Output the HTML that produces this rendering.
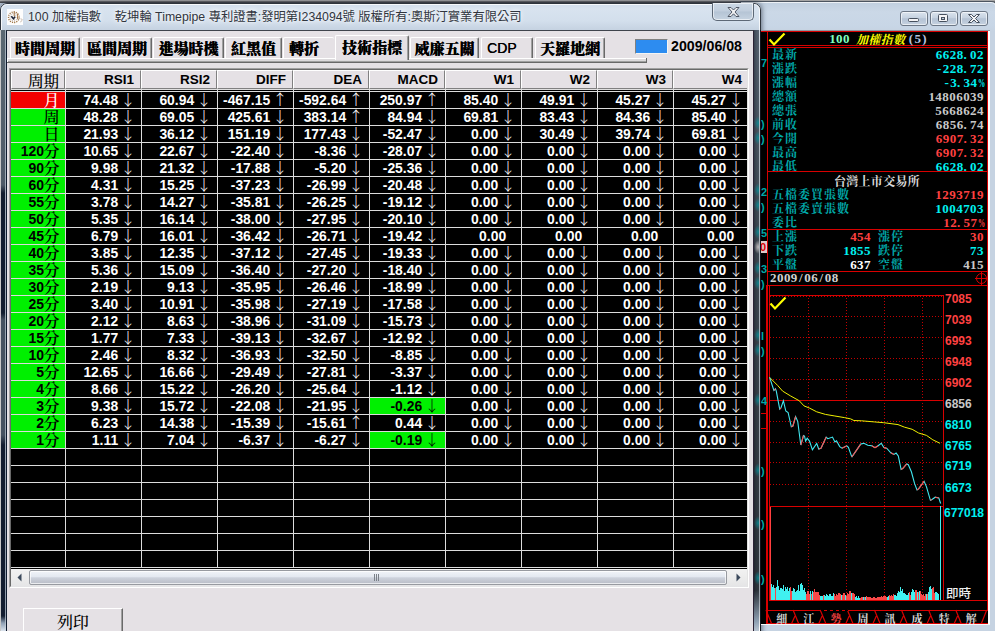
<!DOCTYPE html>
<html lang="zh-Hant"><head><meta charset="utf-8"><title>100 加權指數</title>
<style>
html,body{margin:0;padding:0}
body{width:995px;height:631px;overflow:hidden;position:relative;background:#c9d6e5;font-family:"Liberation Sans","Noto Sans CJK TC",sans-serif}
div{position:absolute;box-sizing:border-box;white-space:nowrap}
svg{position:absolute;overflow:visible}
b{font-weight:bold}i,u{font-style:normal;text-decoration:none}
.tab{border-left:1px solid #fff;border-top:1px solid #fff;border-right:1px solid #696969;box-shadow:inset -1px 0 0 #a0a0a0;font-family:"Noto Serif CJK TC","Noto Serif CJK SC","Liberation Serif",serif;font-weight:900;font-size:15px;line-height:19px;color:#000;text-align:center;border-radius:2px 2px 0 0;background:#e5e1e5;text-shadow:0.35px 0 0 #000}
.tab.lat{font-family:"Liberation Sans",sans-serif;font-weight:normal;font-size:14px;text-align:left;padding-left:5px;line-height:21px}
.hd{background:#e5e1e5;border-left:1px solid #fff;border-top:1px solid #fff;border-right:1px solid #808080;border-bottom:1px solid #808080;font-weight:bold;font-size:13.5px;line-height:18px;text-align:right;padding-right:6px;color:#000}
.h0{font-family:"Noto Serif CJK TC","Noto Serif CJK SC",serif;font-weight:500;font-size:15.5px;padding-right:5px;line-height:19px}
.c{height:16px;width:75px;color:#fff;font-weight:bold;font-size:13.9px;line-height:16px;text-align:right;padding-right:5px}
.c u{font-family:"Noto Sans CJK TC",sans-serif;font-weight:300;font-size:15px;display:inline-block;width:16px;text-align:center;margin-left:-2px;vertical-align:top;line-height:15px;position:relative;top:-1px}
.hi{background:#00f000;color:#000}
.c0{height:16px;width:54px;font-weight:bold;font-size:14px;line-height:16px;text-align:right;padding-right:5.5px;color:#000}
.c0 i{font-family:"Noto Serif CJK TC","Noto Serif CJK SC",serif;font-weight:600;font-size:16px;vertical-align:top;line-height:16px;margin-left:-0.5px}
.c0.r{background:#f40000;color:#fff}
.c0.g{background:#00f000}
.c0.r i,.c0.one i{font-weight:500}
.rl{font-family:"Noto Serif CJK TC","Noto Serif CJK SC",serif;font-weight:700;font-size:12px;line-height:14px;color:#00a8a8;letter-spacing:1px}
.rv{font-family:"Liberation Serif","Noto Serif CJK TC",serif;font-weight:bold;font-size:13px;line-height:14px;text-align:right;letter-spacing:0.45px}
.rv s{display:inline-block;width:6.5px;text-align:left;text-decoration:none}
.rv s.m{text-align:center}
.rv s.p{display:inline-block;transform:scaleX(.55);transform-origin:0 50%}
.cy{color:#00f0f0}.rd{color:#ff4040}.gy{color:#c8c8c8}.wh{color:#fff}
.ax{font-weight:bold;font-size:12px;line-height:14px;letter-spacing:0}
.bt{font-family:"Noto Serif CJK TC","Noto Serif CJK SC",serif;font-weight:700;font-size:11px;line-height:14px;color:#d8d8d8;text-align:center;width:24px}
.na u{width:8px}

</style></head><body>
<div style="left:0px;top:0px;width:995px;height:3px;background:linear-gradient(#a6a6a6 0,#a6a6a6 1px,#6c6c6e 1px,#6c6c6e 2px,#4a4a4e 2px)"></div>
<div style="left:740px;top:1px;width:258px;height:640px;border:1px solid #4c5560;border-radius:0 7px 0 0;background:linear-gradient(#c0cfdf,#cbd8e7 10px,#c8d6e6 24px,#c6d3e2 29px)"></div>
<div style="left:741px;top:2px;width:256px;height:640px;border:1px solid rgba(255,255,255,.7);border-radius:0 6px 0 0;border-left:none"></div>
<div style="left:900px;top:11px;width:28px;height:15px;border:1px solid #6c7786;border-radius:3px;background:linear-gradient(#dbe4ee,#c6d2e0 45%,#b4c2d4 52%,#c6d2e0);box-shadow:inset 0 0 0 1px rgba(255,255,255,.6)"></div>
<div style="left:930px;top:11px;width:28px;height:15px;border:1px solid #6c7786;border-radius:3px;background:linear-gradient(#dbe4ee,#c6d2e0 45%,#b4c2d4 52%,#c6d2e0);box-shadow:inset 0 0 0 1px rgba(255,255,255,.6)"></div>
<div style="left:960px;top:11px;width:28px;height:15px;border:1px solid #6c7786;border-radius:3px;background:linear-gradient(#dbe4ee,#c6d2e0 45%,#b4c2d4 52%,#c6d2e0);box-shadow:inset 0 0 0 1px rgba(255,255,255,.6)"></div>
<svg style="left:900px;top:11px" width="88" height="15" viewBox="0 0 88 15"><rect x="8.5" y="7.5" width="10" height="3" rx="1" fill="#f4f4f6" stroke="#47505e"/><rect x="38.500" y="3.500" width="9" height="7" rx="1" fill="#f4f4f6" stroke="#47505e"/><rect x="41.5" y="6.5" width="3" height="2" fill="#c0ccda" stroke="#47505e"/><path d="M68.500 3.500h3l2.500 2.500l2.500-2.500h3l-4 4l4 4h-3l-2.500-2.500l-2.500 2.500h-3l4-4z" fill="#f4f4f6" stroke="#47505e" stroke-linejoin="round"/></svg>
<div style="left:0px;top:3px;width:761px;height:640px;border-radius:7px 7px 0 0;box-shadow:0 0 5px 1px rgba(20,30,45,.55);background:linear-gradient(#cfdcea,#d8e3ef 6px,#d3dfec 18px,#c5d2e1 27px)"></div>
<div style="left:0px;top:3px;width:761px;height:640px;border:1px solid #2e343c;border-radius:7px 7px 0 0"></div>
<div style="left:1px;top:4px;width:759px;height:640px;border:1px solid rgba(255,255,255,.8);border-radius:6px 6px 0 0"></div>
<div style="left:0px;top:30px;width:1px;height:620px;background:#c8c8c8"></div>
<div style="left:1px;top:30px;width:4px;height:620px;background:linear-gradient(#5b6872,#4e5a68 155px,#131d30 163px,#131d30 283px,#465261 290px,#465261 405px,#131d30 415px,#131d30 586px,#8fa0b4 593px,#dbe4ee 601px)"></div>
<div style="left:5px;top:30px;width:1px;height:620px;background:linear-gradient(#a3afba,#97a3af 400px,#8e9aa8 585px,#d0dae4 600px)"></div>
<div style="left:754px;top:30px;width:5px;height:620px;background:linear-gradient(90deg,#394351,#4a5563 2px,#586472)"></div>
<div style="left:754px;top:30px;width:5px;height:620px;background:linear-gradient(rgba(0,0,0,0),rgba(0,0,0,.25) 200px,rgba(0,0,0,.45) 560px,rgba(160,180,200,.8) 592px,rgba(235,240,245,1) 612px)"></div>
<div style="left:754px;top:116px;width:6px;height:14px;background:radial-gradient(ellipse at 70% 50%,rgba(0,150,160,.75),rgba(0,150,160,0) 70%)"></div>
<div style="left:754px;top:131px;width:6px;height:14px;background:radial-gradient(ellipse at 70% 50%,rgba(0,150,160,.75),rgba(0,150,160,0) 70%)"></div>
<div style="left:754px;top:183px;width:6px;height:14px;background:radial-gradient(ellipse at 70% 50%,rgba(0,150,160,.75),rgba(0,150,160,0) 70%)"></div>
<div style="left:754px;top:198px;width:6px;height:14px;background:radial-gradient(ellipse at 70% 50%,rgba(0,150,160,.75),rgba(0,150,160,0) 70%)"></div>
<div style="left:754px;top:225px;width:6px;height:14px;background:radial-gradient(ellipse at 70% 50%,rgba(0,150,160,.75),rgba(0,150,160,0) 70%)"></div>
<div style="left:754px;top:240px;width:6px;height:14px;background:radial-gradient(ellipse at 70% 50%,rgba(235,225,225,.75),rgba(235,225,225,0) 70%)"></div>
<div style="left:754px;top:261px;width:6px;height:14px;background:radial-gradient(ellipse at 70% 50%,rgba(0,150,160,.75),rgba(0,150,160,0) 70%)"></div>
<div style="left:754px;top:276px;width:6px;height:14px;background:radial-gradient(ellipse at 70% 50%,rgba(0,150,160,.75),rgba(0,150,160,0) 70%)"></div>
<div style="left:754px;top:328px;width:6px;height:14px;background:radial-gradient(ellipse at 70% 50%,rgba(0,150,160,.75),rgba(0,150,160,0) 70%)"></div>
<div style="left:754px;top:343px;width:6px;height:14px;background:radial-gradient(ellipse at 70% 50%,rgba(0,150,160,.75),rgba(0,150,160,0) 70%)"></div>
<div style="left:754px;top:393px;width:6px;height:14px;background:radial-gradient(ellipse at 70% 50%,rgba(0,150,160,.75),rgba(0,150,160,0) 70%)"></div>
<div style="left:754px;top:463px;width:6px;height:14px;background:radial-gradient(ellipse at 70% 50%,rgba(0,150,160,.75),rgba(0,150,160,0) 70%)"></div>
<div style="left:754px;top:516px;width:6px;height:14px;background:radial-gradient(ellipse at 70% 50%,rgba(0,150,160,.75),rgba(0,150,160,0) 70%)"></div>
<div style="left:754px;top:571px;width:6px;height:14px;background:radial-gradient(ellipse at 70% 50%,rgba(0,150,160,.75),rgba(0,150,160,0) 70%)"></div>
<div style="left:759px;top:30px;width:1px;height:620px;background:linear-gradient(#d0d8e0,#aeb6be 100px,#9aa2aa 570px,#fff 600px)"></div>
<div style="left:760px;top:30px;width:1px;height:620px;background:#10141c"></div>
<div style="left:7px;top:9px;width:16px;height:16px;background:#fdfdfd"></div>
<svg style="left:7px;top:9px" width="16" height="16" viewBox="0 0 16 16"><g fill="none"><circle cx="6.800" cy="8.200" r="5.300" stroke="#a07848" stroke-width="1.300" stroke-dasharray="1.200 1"/><circle cx="6.800" cy="8.200" r="3.800" stroke="#8a6a58" stroke-width="1" stroke-dasharray="0.900 1.400" opacity=".8"/><circle cx="6.800" cy="8.200" r="2.200" stroke="#9a9050" stroke-width=".9" stroke-dasharray="0.800 1.300" opacity=".7"/><path d="M7.300 2.500v5M10.500 4.500v5.500" stroke="#a06a3a" stroke-width="1" opacity=".85"/><path d="M4.300 7.200l2.200 2.600l1.600-2.200" stroke="#1c2238" stroke-width="1.500"/><path d="M11.500 9.500q2.500 0.200 4 1.200q-1.500 1.500-2 2.800" stroke="#b09a88" stroke-width="1" stroke-dasharray="1.200 0.800"/></g></svg>
<div style="left:28px;top:8px;width:520px;height:18px;font-size:12.3px;line-height:18px;color:#30353e;white-space:pre;text-shadow:0 0 6px #fff,0 0 3px rgba(255,255,255,.8)">100 加權指數    乾坤輪 Timepipe 專利證書:發明第I234094號 版權所有:奧斯汀實業有限公司</div>
<div style="left:712px;top:3px;width:42px;height:18px;border:1px solid #5d6876;border-top:none;border-radius:0 0 5px 5px;background:linear-gradient(#ccd8e5,#c1cedd 48%,#b5c4d5 52%,#c6d3e1);box-shadow:inset 0 0 0 1px rgba(255,255,255,.6)"></div>
<svg style="left:727px;top:7px" width="13" height="10" viewBox="0 0 13 10"><path d="M1 .5h3l2.500 2.500l2.500-2.500h3l-4 4.500l4 4.500h-3l-2.500-2.700l-2.500 2.700h-3l4-4.500z" fill="#f2f2f4" stroke="#505866" stroke-linejoin="round"/></svg>
<div style="left:6px;top:30px;width:748px;height:620px;border:1px solid #0e1a2e;border-top-color:#3f444c;border-right-color:#2a2235;background:#e5e1e5"></div>
<div style="left:7px;top:58px;width:640px;height:1px;background:#fff"></div>
<div style="left:7px;top:58px;width:1px;height:4px;background:#fff"></div>
<div style="left:8px;top:59px;width:638px;height:2px;background:#dcdadc"></div>
<div style="left:8px;top:61px;width:639px;height:1px;background:#a0a0a0"></div>
<div style="left:7px;top:62px;width:640px;height:1px;background:#696969"></div>
<div style="left:646px;top:58px;width:1px;height:5px;background:#696969"></div>
<div class="tab " style="left:10px;top:37px;width:70px;height:21px;">時間周期</div>
<div class="tab " style="left:82px;top:37px;width:70px;height:21px;">區間周期</div>
<div class="tab " style="left:153px;top:37px;width:71px;height:21px;">進場時機</div>
<div class="tab " style="left:225px;top:37px;width:57px;height:21px;">紅黑值</div>
<div class="tab " style="left:283px;top:37px;width:51px;height:21px;text-align:left;padding-left:5px;border-right:none;box-shadow:none;">轉折</div>
<div class="tab " style="left:410px;top:37px;width:69px;height:21px;">威廉五關</div>
<div class="tab lat" style="left:481px;top:37px;width:52px;height:21px;">CDP</div>
<div class="tab " style="left:535px;top:37px;width:70px;height:21px;">天羅地網</div>
<div class="tab" style="left:335px;top:35px;width:74px;height:25px;line-height:21px;z-index:2">技術指標</div>
<div style="left:635px;top:39px;width:33px;height:15px;border:1px solid #f4f4f4;border-top-color:#808080;border-left-color:#808080;background:#2d8cf0"></div>
<div style="left:671px;top:37px;width:75px;height:18px;font-weight:bold;font-size:14.2px;line-height:18px;color:#000">2009/06/08</div>
<div style="left:9px;top:68px;width:740px;height:520px;border:1px solid #a0a0a0;border-right-color:#fff;border-bottom-color:#fff;background:#e5e1e5"></div>
<div style="left:10px;top:69px;width:738px;height:518px;border:1px solid #696969;border-right-color:#e3e3e3;border-bottom-color:#e3e3e3;background:#000"></div>
<div style="left:11px;top:70px;width:736px;height:498px;overflow:hidden;background:#000">
<div class="hd h0" style="left:0px;top:0px;width:54px;height:19px;">周期</div>
<div class="hd" style="left:54px;top:0px;width:76px;height:19px;">RSI1</div>
<div class="hd" style="left:130px;top:0px;width:76px;height:19px;">RSI2</div>
<div class="hd" style="left:206px;top:0px;width:76px;height:19px;">DIFF</div>
<div class="hd" style="left:282px;top:0px;width:76px;height:19px;">DEA</div>
<div class="hd" style="left:358px;top:0px;width:76px;height:19px;">MACD</div>
<div class="hd" style="left:434px;top:0px;width:76px;height:19px;">W1</div>
<div class="hd" style="left:510px;top:0px;width:76px;height:19px;">W2</div>
<div class="hd" style="left:586px;top:0px;width:76px;height:19px;">W3</div>
<div class="hd" style="left:662px;top:0px;width:76px;height:19px;">W4</div>
<div style="left:0px;top:19px;width:737px;height:1px;background:#e0e0e0"></div>
<div class="c0 r one" style="left:0;top:22px"><i>月</i></div>
<div class="c" style="left:55px;top:22px">74.48 <u>↓</u></div>
<div class="c" style="left:131px;top:22px">60.94 <u>↓</u></div>
<div class="c" style="left:207px;top:22px">-467.15 <u>↑</u></div>
<div class="c" style="left:283px;top:22px">-592.64 <u>↑</u></div>
<div class="c" style="left:359px;top:22px">250.97 <u>↑</u></div>
<div class="c" style="left:435px;top:22px">85.40 <u>↓</u></div>
<div class="c" style="left:511px;top:22px">49.91 <u>↓</u></div>
<div class="c" style="left:587px;top:22px">45.27 <u>↓</u></div>
<div class="c" style="left:663px;top:22px">45.27 <u>↓</u></div>
<div class="c0 g one" style="left:0;top:39px"><i>周</i></div>
<div class="c" style="left:55px;top:39px">48.28 <u>↓</u></div>
<div class="c" style="left:131px;top:39px">69.05 <u>↓</u></div>
<div class="c" style="left:207px;top:39px">425.61 <u>↓</u></div>
<div class="c" style="left:283px;top:39px">383.14 <u>↑</u></div>
<div class="c" style="left:359px;top:39px">84.94 <u>↓</u></div>
<div class="c" style="left:435px;top:39px">69.81 <u>↓</u></div>
<div class="c" style="left:511px;top:39px">83.43 <u>↓</u></div>
<div class="c" style="left:587px;top:39px">84.36 <u>↓</u></div>
<div class="c" style="left:663px;top:39px">85.40 <u>↓</u></div>
<div class="c0 g one" style="left:0;top:56px"><i>日</i></div>
<div class="c" style="left:55px;top:56px">21.93 <u>↓</u></div>
<div class="c" style="left:131px;top:56px">36.12 <u>↓</u></div>
<div class="c" style="left:207px;top:56px">151.19 <u>↓</u></div>
<div class="c" style="left:283px;top:56px">177.43 <u>↓</u></div>
<div class="c" style="left:359px;top:56px">-52.47 <u>↓</u></div>
<div class="c" style="left:435px;top:56px">0.00 <u>↓</u></div>
<div class="c" style="left:511px;top:56px">30.49 <u>↓</u></div>
<div class="c" style="left:587px;top:56px">39.74 <u>↓</u></div>
<div class="c" style="left:663px;top:56px">69.81 <u>↓</u></div>
<div class="c0 g" style="left:0;top:73px"><b>120</b><i>分</i></div>
<div class="c" style="left:55px;top:73px">10.65 <u>↓</u></div>
<div class="c" style="left:131px;top:73px">22.67 <u>↓</u></div>
<div class="c" style="left:207px;top:73px">-22.40 <u>↓</u></div>
<div class="c" style="left:283px;top:73px">-8.36 <u>↓</u></div>
<div class="c" style="left:359px;top:73px">-28.07 <u>↓</u></div>
<div class="c" style="left:435px;top:73px">0.00 <u>↓</u></div>
<div class="c" style="left:511px;top:73px">0.00 <u>↓</u></div>
<div class="c" style="left:587px;top:73px">0.00 <u>↓</u></div>
<div class="c" style="left:663px;top:73px">0.00 <u>↓</u></div>
<div class="c0 g" style="left:0;top:90px"><b>90</b><i>分</i></div>
<div class="c" style="left:55px;top:90px">9.98 <u>↓</u></div>
<div class="c" style="left:131px;top:90px">21.32 <u>↓</u></div>
<div class="c" style="left:207px;top:90px">-17.88 <u>↓</u></div>
<div class="c" style="left:283px;top:90px">-5.20 <u>↓</u></div>
<div class="c" style="left:359px;top:90px">-25.36 <u>↓</u></div>
<div class="c" style="left:435px;top:90px">0.00 <u>↓</u></div>
<div class="c" style="left:511px;top:90px">0.00 <u>↓</u></div>
<div class="c" style="left:587px;top:90px">0.00 <u>↓</u></div>
<div class="c" style="left:663px;top:90px">0.00 <u>↓</u></div>
<div class="c0 g" style="left:0;top:107px"><b>60</b><i>分</i></div>
<div class="c" style="left:55px;top:107px">4.31 <u>↓</u></div>
<div class="c" style="left:131px;top:107px">15.25 <u>↓</u></div>
<div class="c" style="left:207px;top:107px">-37.23 <u>↓</u></div>
<div class="c" style="left:283px;top:107px">-26.99 <u>↓</u></div>
<div class="c" style="left:359px;top:107px">-20.48 <u>↓</u></div>
<div class="c" style="left:435px;top:107px">0.00 <u>↓</u></div>
<div class="c" style="left:511px;top:107px">0.00 <u>↓</u></div>
<div class="c" style="left:587px;top:107px">0.00 <u>↓</u></div>
<div class="c" style="left:663px;top:107px">0.00 <u>↓</u></div>
<div class="c0 g" style="left:0;top:124px"><b>55</b><i>分</i></div>
<div class="c" style="left:55px;top:124px">3.78 <u>↓</u></div>
<div class="c" style="left:131px;top:124px">14.27 <u>↓</u></div>
<div class="c" style="left:207px;top:124px">-35.81 <u>↓</u></div>
<div class="c" style="left:283px;top:124px">-26.25 <u>↓</u></div>
<div class="c" style="left:359px;top:124px">-19.12 <u>↓</u></div>
<div class="c" style="left:435px;top:124px">0.00 <u>↓</u></div>
<div class="c" style="left:511px;top:124px">0.00 <u>↓</u></div>
<div class="c" style="left:587px;top:124px">0.00 <u>↓</u></div>
<div class="c" style="left:663px;top:124px">0.00 <u>↓</u></div>
<div class="c0 g" style="left:0;top:141px"><b>50</b><i>分</i></div>
<div class="c" style="left:55px;top:141px">5.35 <u>↓</u></div>
<div class="c" style="left:131px;top:141px">16.14 <u>↓</u></div>
<div class="c" style="left:207px;top:141px">-38.00 <u>↓</u></div>
<div class="c" style="left:283px;top:141px">-27.95 <u>↓</u></div>
<div class="c" style="left:359px;top:141px">-20.10 <u>↓</u></div>
<div class="c" style="left:435px;top:141px">0.00 <u>↓</u></div>
<div class="c" style="left:511px;top:141px">0.00 <u>↓</u></div>
<div class="c" style="left:587px;top:141px">0.00 <u>↓</u></div>
<div class="c" style="left:663px;top:141px">0.00 <u>↓</u></div>
<div class="c0 g" style="left:0;top:158px"><b>45</b><i>分</i></div>
<div class="c" style="left:55px;top:158px">6.79 <u>↓</u></div>
<div class="c" style="left:131px;top:158px">16.01 <u>↓</u></div>
<div class="c" style="left:207px;top:158px">-36.42 <u>↓</u></div>
<div class="c" style="left:283px;top:158px">-26.71 <u>↓</u></div>
<div class="c" style="left:359px;top:158px">-19.42 <u>↓</u></div>
<div class="c na" style="left:435px;top:158px">0.00 <u>&nbsp;</u></div>
<div class="c na" style="left:511px;top:158px">0.00 <u>&nbsp;</u></div>
<div class="c na" style="left:587px;top:158px">0.00 <u>&nbsp;</u></div>
<div class="c na" style="left:663px;top:158px">0.00 <u>&nbsp;</u></div>
<div class="c0 g" style="left:0;top:175px"><b>40</b><i>分</i></div>
<div class="c" style="left:55px;top:175px">3.85 <u>↓</u></div>
<div class="c" style="left:131px;top:175px">12.35 <u>↓</u></div>
<div class="c" style="left:207px;top:175px">-37.12 <u>↓</u></div>
<div class="c" style="left:283px;top:175px">-27.45 <u>↓</u></div>
<div class="c" style="left:359px;top:175px">-19.33 <u>↓</u></div>
<div class="c" style="left:435px;top:175px">0.00 <u>↓</u></div>
<div class="c" style="left:511px;top:175px">0.00 <u>↓</u></div>
<div class="c" style="left:587px;top:175px">0.00 <u>↓</u></div>
<div class="c" style="left:663px;top:175px">0.00 <u>↓</u></div>
<div class="c0 g" style="left:0;top:192px"><b>35</b><i>分</i></div>
<div class="c" style="left:55px;top:192px">5.36 <u>↓</u></div>
<div class="c" style="left:131px;top:192px">15.09 <u>↓</u></div>
<div class="c" style="left:207px;top:192px">-36.40 <u>↓</u></div>
<div class="c" style="left:283px;top:192px">-27.20 <u>↓</u></div>
<div class="c" style="left:359px;top:192px">-18.40 <u>↓</u></div>
<div class="c" style="left:435px;top:192px">0.00 <u>↓</u></div>
<div class="c" style="left:511px;top:192px">0.00 <u>↓</u></div>
<div class="c" style="left:587px;top:192px">0.00 <u>↓</u></div>
<div class="c" style="left:663px;top:192px">0.00 <u>↓</u></div>
<div class="c0 g" style="left:0;top:209px"><b>30</b><i>分</i></div>
<div class="c" style="left:55px;top:209px">2.19 <u>↓</u></div>
<div class="c" style="left:131px;top:209px">9.13 <u>↓</u></div>
<div class="c" style="left:207px;top:209px">-35.95 <u>↓</u></div>
<div class="c" style="left:283px;top:209px">-26.46 <u>↓</u></div>
<div class="c" style="left:359px;top:209px">-18.99 <u>↓</u></div>
<div class="c" style="left:435px;top:209px">0.00 <u>↓</u></div>
<div class="c" style="left:511px;top:209px">0.00 <u>↓</u></div>
<div class="c" style="left:587px;top:209px">0.00 <u>↓</u></div>
<div class="c" style="left:663px;top:209px">0.00 <u>↓</u></div>
<div class="c0 g" style="left:0;top:226px"><b>25</b><i>分</i></div>
<div class="c" style="left:55px;top:226px">3.40 <u>↓</u></div>
<div class="c" style="left:131px;top:226px">10.91 <u>↓</u></div>
<div class="c" style="left:207px;top:226px">-35.98 <u>↓</u></div>
<div class="c" style="left:283px;top:226px">-27.19 <u>↓</u></div>
<div class="c" style="left:359px;top:226px">-17.58 <u>↓</u></div>
<div class="c" style="left:435px;top:226px">0.00 <u>↓</u></div>
<div class="c" style="left:511px;top:226px">0.00 <u>↓</u></div>
<div class="c" style="left:587px;top:226px">0.00 <u>↓</u></div>
<div class="c" style="left:663px;top:226px">0.00 <u>↓</u></div>
<div class="c0 g" style="left:0;top:243px"><b>20</b><i>分</i></div>
<div class="c" style="left:55px;top:243px">2.12 <u>↓</u></div>
<div class="c" style="left:131px;top:243px">8.63 <u>↓</u></div>
<div class="c" style="left:207px;top:243px">-38.96 <u>↓</u></div>
<div class="c" style="left:283px;top:243px">-31.09 <u>↓</u></div>
<div class="c" style="left:359px;top:243px">-15.73 <u>↓</u></div>
<div class="c" style="left:435px;top:243px">0.00 <u>↓</u></div>
<div class="c" style="left:511px;top:243px">0.00 <u>↓</u></div>
<div class="c" style="left:587px;top:243px">0.00 <u>↓</u></div>
<div class="c" style="left:663px;top:243px">0.00 <u>↓</u></div>
<div class="c0 g" style="left:0;top:260px"><b>15</b><i>分</i></div>
<div class="c" style="left:55px;top:260px">1.77 <u>↓</u></div>
<div class="c" style="left:131px;top:260px">7.33 <u>↓</u></div>
<div class="c" style="left:207px;top:260px">-39.13 <u>↓</u></div>
<div class="c" style="left:283px;top:260px">-32.67 <u>↓</u></div>
<div class="c" style="left:359px;top:260px">-12.92 <u>↓</u></div>
<div class="c" style="left:435px;top:260px">0.00 <u>↓</u></div>
<div class="c" style="left:511px;top:260px">0.00 <u>↓</u></div>
<div class="c" style="left:587px;top:260px">0.00 <u>↓</u></div>
<div class="c" style="left:663px;top:260px">0.00 <u>↓</u></div>
<div class="c0 g" style="left:0;top:277px"><b>10</b><i>分</i></div>
<div class="c" style="left:55px;top:277px">2.46 <u>↓</u></div>
<div class="c" style="left:131px;top:277px">8.32 <u>↓</u></div>
<div class="c" style="left:207px;top:277px">-36.93 <u>↓</u></div>
<div class="c" style="left:283px;top:277px">-32.50 <u>↓</u></div>
<div class="c" style="left:359px;top:277px">-8.85 <u>↓</u></div>
<div class="c" style="left:435px;top:277px">0.00 <u>↓</u></div>
<div class="c" style="left:511px;top:277px">0.00 <u>↓</u></div>
<div class="c" style="left:587px;top:277px">0.00 <u>↓</u></div>
<div class="c" style="left:663px;top:277px">0.00 <u>↓</u></div>
<div class="c0 g" style="left:0;top:294px"><b>5</b><i>分</i></div>
<div class="c" style="left:55px;top:294px">12.65 <u>↓</u></div>
<div class="c" style="left:131px;top:294px">16.66 <u>↓</u></div>
<div class="c" style="left:207px;top:294px">-29.49 <u>↓</u></div>
<div class="c" style="left:283px;top:294px">-27.81 <u>↓</u></div>
<div class="c" style="left:359px;top:294px">-3.37 <u>↓</u></div>
<div class="c" style="left:435px;top:294px">0.00 <u>↓</u></div>
<div class="c" style="left:511px;top:294px">0.00 <u>↓</u></div>
<div class="c" style="left:587px;top:294px">0.00 <u>↓</u></div>
<div class="c" style="left:663px;top:294px">0.00 <u>↓</u></div>
<div class="c0 g" style="left:0;top:311px"><b>4</b><i>分</i></div>
<div class="c" style="left:55px;top:311px">8.66 <u>↓</u></div>
<div class="c" style="left:131px;top:311px">15.22 <u>↓</u></div>
<div class="c" style="left:207px;top:311px">-26.20 <u>↓</u></div>
<div class="c" style="left:283px;top:311px">-25.64 <u>↓</u></div>
<div class="c" style="left:359px;top:311px">-1.12 <u>↓</u></div>
<div class="c" style="left:435px;top:311px">0.00 <u>↓</u></div>
<div class="c" style="left:511px;top:311px">0.00 <u>↓</u></div>
<div class="c" style="left:587px;top:311px">0.00 <u>↓</u></div>
<div class="c" style="left:663px;top:311px">0.00 <u>↓</u></div>
<div class="c0 g" style="left:0;top:328px"><b>3</b><i>分</i></div>
<div class="c" style="left:55px;top:328px">9.38 <u>↓</u></div>
<div class="c" style="left:131px;top:328px">15.72 <u>↓</u></div>
<div class="c" style="left:207px;top:328px">-22.08 <u>↓</u></div>
<div class="c" style="left:283px;top:328px">-21.95 <u>↓</u></div>
<div class="c hi" style="left:359px;top:328px">-0.26 <u>↓</u></div>
<div class="c" style="left:435px;top:328px">0.00 <u>↓</u></div>
<div class="c" style="left:511px;top:328px">0.00 <u>↓</u></div>
<div class="c" style="left:587px;top:328px">0.00 <u>↓</u></div>
<div class="c" style="left:663px;top:328px">0.00 <u>↓</u></div>
<div class="c0 g" style="left:0;top:345px"><b>2</b><i>分</i></div>
<div class="c" style="left:55px;top:345px">6.23 <u>↓</u></div>
<div class="c" style="left:131px;top:345px">14.38 <u>↓</u></div>
<div class="c" style="left:207px;top:345px">-15.39 <u>↓</u></div>
<div class="c" style="left:283px;top:345px">-15.61 <u>↑</u></div>
<div class="c" style="left:359px;top:345px">0.44 <u>↓</u></div>
<div class="c" style="left:435px;top:345px">0.00 <u>↓</u></div>
<div class="c" style="left:511px;top:345px">0.00 <u>↓</u></div>
<div class="c" style="left:587px;top:345px">0.00 <u>↓</u></div>
<div class="c" style="left:663px;top:345px">0.00 <u>↓</u></div>
<div class="c0 g" style="left:0;top:362px"><b>1</b><i>分</i></div>
<div class="c" style="left:55px;top:362px">1.11 <u>↓</u></div>
<div class="c" style="left:131px;top:362px">7.04 <u>↓</u></div>
<div class="c" style="left:207px;top:362px">-6.37 <u>↓</u></div>
<div class="c" style="left:283px;top:362px">-6.27 <u>↓</u></div>
<div class="c hi" style="left:359px;top:362px">-0.19 <u>↓</u></div>
<div class="c" style="left:435px;top:362px">0.00 <u>↓</u></div>
<div class="c" style="left:511px;top:362px">0.00 <u>↓</u></div>
<div class="c" style="left:587px;top:362px">0.00 <u>↓</u></div>
<div class="c" style="left:663px;top:362px">0.00 <u>↓</u></div>
<div style="left:0px;top:21px;width:737px;height:1px;background:#dcdcdc"></div>
<div style="left:0px;top:38px;width:737px;height:1px;background:#dcdcdc"></div>
<div style="left:0px;top:55px;width:737px;height:1px;background:#dcdcdc"></div>
<div style="left:0px;top:72px;width:737px;height:1px;background:#dcdcdc"></div>
<div style="left:0px;top:89px;width:737px;height:1px;background:#dcdcdc"></div>
<div style="left:0px;top:106px;width:737px;height:1px;background:#dcdcdc"></div>
<div style="left:0px;top:123px;width:737px;height:1px;background:#dcdcdc"></div>
<div style="left:0px;top:140px;width:737px;height:1px;background:#dcdcdc"></div>
<div style="left:0px;top:157px;width:737px;height:1px;background:#dcdcdc"></div>
<div style="left:0px;top:174px;width:737px;height:1px;background:#dcdcdc"></div>
<div style="left:0px;top:191px;width:737px;height:1px;background:#dcdcdc"></div>
<div style="left:0px;top:208px;width:737px;height:1px;background:#dcdcdc"></div>
<div style="left:0px;top:225px;width:737px;height:1px;background:#dcdcdc"></div>
<div style="left:0px;top:242px;width:737px;height:1px;background:#dcdcdc"></div>
<div style="left:0px;top:259px;width:737px;height:1px;background:#dcdcdc"></div>
<div style="left:0px;top:276px;width:737px;height:1px;background:#dcdcdc"></div>
<div style="left:0px;top:293px;width:737px;height:1px;background:#dcdcdc"></div>
<div style="left:0px;top:310px;width:737px;height:1px;background:#dcdcdc"></div>
<div style="left:0px;top:327px;width:737px;height:1px;background:#dcdcdc"></div>
<div style="left:0px;top:344px;width:737px;height:1px;background:#dcdcdc"></div>
<div style="left:0px;top:361px;width:737px;height:1px;background:#dcdcdc"></div>
<div style="left:0px;top:378px;width:737px;height:1px;background:#dcdcdc"></div>
<div style="left:0px;top:395px;width:737px;height:1px;background:#dcdcdc"></div>
<div style="left:0px;top:412px;width:737px;height:1px;background:#dcdcdc"></div>
<div style="left:0px;top:429px;width:737px;height:1px;background:#dcdcdc"></div>
<div style="left:0px;top:446px;width:737px;height:1px;background:#dcdcdc"></div>
<div style="left:0px;top:463px;width:737px;height:1px;background:#dcdcdc"></div>
<div style="left:0px;top:480px;width:737px;height:1px;background:#dcdcdc"></div>
<div style="left:0px;top:497px;width:737px;height:1px;background:#dcdcdc"></div>
<div style="left:54px;top:20px;width:1px;height:478px;background:#dcdcdc"></div>
<div style="left:130px;top:20px;width:1px;height:478px;background:#dcdcdc"></div>
<div style="left:206px;top:20px;width:1px;height:478px;background:#dcdcdc"></div>
<div style="left:282px;top:20px;width:1px;height:478px;background:#dcdcdc"></div>
<div style="left:358px;top:20px;width:1px;height:478px;background:#dcdcdc"></div>
<div style="left:434px;top:20px;width:1px;height:478px;background:#dcdcdc"></div>
<div style="left:510px;top:20px;width:1px;height:478px;background:#dcdcdc"></div>
<div style="left:586px;top:20px;width:1px;height:478px;background:#dcdcdc"></div>
<div style="left:662px;top:20px;width:1px;height:478px;background:#dcdcdc"></div>
<div style="left:738px;top:20px;width:1px;height:478px;background:#dcdcdc"></div>
</div>
<div style="left:11px;top:568px;width:736px;height:1px;background:#000"></div>
<div style="left:11px;top:569px;width:736px;height:18px;background:linear-gradient(#f2f2f2,#ececec 50%,#e4e4e6)"></div>
<div style="left:29px;top:570px;width:698px;height:15px;border:1px solid #979aa0;border-radius:2px;background:linear-gradient(#f1f4f9,#e3e8f0 45%,#cdd2dc 52%,#b9bcc6);box-shadow:inset 0 0 0 1px rgba(255,255,255,.7)"></div>
<svg style="left:17px;top:573px" width="5" height="9" viewBox="0 0 5 9"><path d="M4.500 0.500v8l-4-4z" fill="#3c4a5c"/></svg>
<svg style="left:736px;top:573px" width="5" height="9" viewBox="0 0 5 9"><path d="M.5 .5v8l4-4z" fill="#3c4a5c"/></svg>
<svg style="left:373px;top:574px" width="8" height="7" viewBox="0 0 8 7"><path d="M1.500 0v7M3.500 0v7M5.500 0v7" stroke="#7a8088" fill="none"/></svg>
<div style="left:23px;top:608px;width:100px;height:30px;border:1px solid #fff;border-right-color:#696969;box-shadow:inset -1px 0 0 #a0a0a0;background:#e5e1e5;font-family:'Noto Serif CJK TC','Noto Serif CJK SC',serif;font-weight:500;font-size:16px;line-height:26px;text-align:center;color:#000">列印</div>
<div style="left:761px;top:30px;width:229px;height:1px;background:#8f98a3"></div>
<div style="left:761px;top:31px;width:227px;height:593px;background:#000"></div>
<div style="left:988px;top:31px;width:2px;height:594px;background:#fff"></div>
<div style="left:761px;top:624px;width:229px;height:1px;background:#f4f6f8"></div>
<div style="left:761px;top:31px;width:227px;height:1px;background:#d80000"></div>
<div style="left:767px;top:31px;width:1px;height:255px;background:#d80000"></div>
<div style="left:987px;top:31px;width:1px;height:255px;background:#d80000"></div>
<div style="left:766px;top:285px;width:2px;height:339px;background:#d80000"></div>
<div style="left:987px;top:285px;width:1px;height:326px;background:#d80000"></div>
<div style="left:767px;top:45px;width:221px;height:1px;background:#d80000"></div>
<div style="left:767px;top:47px;width:221px;height:1px;background:#d80000"></div>
<svg style="left:768px;top:32px" width="18" height="14" viewBox="0 0 18 14"><path d="M1.500 7.500l4.500 5l10.500-11" fill="none" stroke="#ffff00" stroke-width="2.200"/></svg>
<div class="rv" style="left:826px;top:32px;width:24px;height:13px;color:#80ffc0;">100</div>
<div class="rl" style="left:856px;top:32px;width:54px;height:13px;color:#ffff00;font-style:italic;letter-spacing:0.3px">加權指數</div>
<div class="rv" style="left:908px;top:32px;width:22px;height:13px;color:#b8c4e0;text-align:left"><s class="m">(</s>5<s class="m">)</s></div>
<div class="rl" style="left:772px;top:47px;width:100px;height:14px;">最新</div>
<div class="rv cy" style="left:914px;top:48px;width:70px;height:14px;">6628<s>.</s>02</div>
<div class="rl" style="left:772px;top:61px;width:100px;height:14px;">漲跌</div>
<div class="rv cy" style="left:914px;top:62px;width:70px;height:14px;"><s class="m">-</s>228<s>.</s>72</div>
<div class="rl" style="left:772px;top:75px;width:100px;height:14px;">漲幅</div>
<div class="rv cy" style="left:914px;top:76px;width:70px;height:14px;"><s class="m">-</s>3<s>.</s>34<s class="p">%</s></div>
<div class="rl" style="left:772px;top:89px;width:100px;height:14px;">總額</div>
<div class="rv gy" style="left:914px;top:90px;width:70px;height:14px;">14806039</div>
<div class="rl" style="left:772px;top:103px;width:100px;height:14px;">總張</div>
<div class="rv gy" style="left:914px;top:104px;width:70px;height:14px;">5668624</div>
<div class="rl" style="left:772px;top:117px;width:100px;height:14px;">前收</div>
<div class="rv gy" style="left:914px;top:118px;width:70px;height:14px;">6856<s>.</s>74</div>
<div class="rl" style="left:772px;top:131px;width:100px;height:14px;">今開</div>
<div class="rv rd" style="left:914px;top:132px;width:70px;height:14px;">6907<s>.</s>32</div>
<div class="rl" style="left:772px;top:145px;width:100px;height:14px;">最高</div>
<div class="rv rd" style="left:914px;top:146px;width:70px;height:14px;">6907<s>.</s>32</div>
<div class="rl" style="left:772px;top:159px;width:100px;height:14px;">最低</div>
<div class="rv cy" style="left:914px;top:160px;width:70px;height:14px;">6628<s>.</s>02</div>
<div style="left:767px;top:171px;width:221px;height:1px;background:#d80000"></div>
<div class="rl" style="left:767px;top:174px;width:220px;height:14px;color:#d8d8d8;text-align:center;letter-spacing:0.3px">台灣上市交易所</div>
<div class="rl" style="left:772px;top:187px;width:100px;height:14px;">五檔委買張數</div>
<div class="rv rd" style="left:914px;top:188px;width:70px;height:14px;">1293719</div>
<div class="rl" style="left:772px;top:201px;width:100px;height:14px;">五檔委賣張數</div>
<div class="rv cy" style="left:914px;top:202px;width:70px;height:14px;">1004703</div>
<div class="rl" style="left:772px;top:215px;width:100px;height:14px;">委比</div>
<div class="rv rd" style="left:914px;top:216px;width:70px;height:14px;">12<s>.</s>57<s class="p">%</s></div>
<div style="left:767px;top:229px;width:221px;height:1px;background:#d80000"></div>
<div class="rl" style="left:772px;top:229px;width:100px;height:14px;">上漲</div>
<div class="rv rd" style="left:831px;top:230px;width:40px;height:14px;">454</div>
<div class="rl" style="left:878px;top:229px;width:100px;height:14px;">漲停</div>
<div class="rv rd" style="left:944px;top:230px;width:40px;height:14px;">30</div>
<div class="rl" style="left:772px;top:243px;width:100px;height:14px;">下跌</div>
<div class="rv cy" style="left:831px;top:244px;width:40px;height:14px;">1855</div>
<div class="rl" style="left:878px;top:243px;width:100px;height:14px;">跌停</div>
<div class="rv cy" style="left:944px;top:244px;width:40px;height:14px;">73</div>
<div class="rl" style="left:772px;top:257px;width:100px;height:14px;">平盤</div>
<div class="rv wh" style="left:831px;top:258px;width:40px;height:14px;">637</div>
<div class="rl" style="left:878px;top:257px;width:100px;height:14px;">空盤</div>
<div class="rv gy" style="left:944px;top:258px;width:40px;height:14px;">415</div>
<div style="left:767px;top:271px;width:221px;height:1px;background:#d80000"></div>
<div class="rv" style="left:770px;top:271px;width:90px;height:14px;text-align:left;color:#d0d0d0">2009<s class="m">/</s>06<s class="m">/</s>08</div>
<svg style="left:975px;top:272px" width="13" height="13" viewBox="0 0 13 13"><g fill="none" stroke="#d80000"><circle cx="6.500" cy="6.500" r="5"/><path d="M6.500 0v13M0 6.500h13"/></g></svg>
<div style="left:767px;top:285px;width:221px;height:1px;background:#d80000"></div>
<div style="left:767px;top:610px;width:221px;height:1px;background:#d80000"></div>
<svg style="left:761px;top:285px" width="227" height="340" viewBox="761 285 227 340"><g stroke="#d80000" stroke-width="1" fill="none" shape-rendering="crispEdges"><path d="M769.500 285v315M943.500 295v305M769 600.500h218M769 400.500h175M769 506.500h175M769 295.500h175"/><path d="M770 296.5h173M770 316.5h173M770 337.5h173M770 358.5h173M770 379.5h173M770 421.5h173M770 442.5h173M770 462.5h173M770 484.5h173M808.5 295v304M846.5 295v304M884.5 295v304M922.5 295v304" stroke-dasharray="1 2" stroke="#c40000"/><path d="M761 413.500h6M761 428.500h6"/></g><path d="M771.5 600v-16M772.5 600v-13M773.5 600v-15M774.5 600v-12M776.5 600v-13M777.5 600v-20M778.5 600v-14M779.5 600v-10M780.5 600v-12M781.5 600v-12M782.5 600v-11M783.5 600v-15M784.5 600v-9M785.5 600v-13M786.5 600v-11M787.5 600v-13M788.5 600v-9M789.5 600v-12M792.5 600v-9M793.5 600v-12M794.5 600v-11M795.5 600v-8M796.5 600v-9M797.5 600v-10M798.5 600v-15M799.5 600v-9M800.5 600v-16M801.5 600v-17M802.5 600v-15M803.5 600v-10M804.5 600v-12M805.5 600v-8M810.5 600v-9M812.5 600v-9M820.5 600v-4M821.5 600v-4M822.5 600v-4M824.5 600v-5M825.5 600v-4M826.5 600v-6M827.5 600v-5M828.5 600v-4M829.5 600v-6M830.5 600v-6M831.5 600v-4M832.5 600v-4M833.5 600v-7M841.5 600v-5M845.5 600v-5M851.5 600v-7M855.5 600v-3M856.5 600v-4M857.5 600v-2M858.5 600v-4M859.5 600v-2M863.5 600v-3M865.5 600v-3M887.5 600v-3M888.5 600v-4M894.5 600v-5M895.5 600v-5M896.5 600v-4M897.5 600v-7M898.5 600v-9M899.5 600v-8M900.5 600v-13M901.5 600v-9M902.5 600v-11M903.5 600v-7M904.5 600v-7M905.5 600v-6M906.5 600v-5M907.5 600v-5M908.5 600v-7M911.5 600v-8M912.5 600v-11M913.5 600v-10M914.5 600v-8M917.5 600v-8M919.5 600v-9M926.5 600v-6M928.5 600v-8M929.5 600v-13M930.5 600v-14M931.5 600v-11M935.5 600v-8M936.5 600v-8M937.5 600v-7M938.5 600v-6" stroke="#40f0f0" fill="none" shape-rendering="crispEdges"/><path d="M775.5 600v-12M790.5 600v-13M791.5 600v-9M806.5 600v-6M807.5 600v-9M808.5 600v-9M809.5 600v-6M811.5 600v-6M813.5 600v-8M814.5 600v-11M815.5 600v-8M816.5 600v-8M817.5 600v-8M818.5 600v-8M819.5 600v-5M823.5 600v-5M834.5 600v-6M835.5 600v-4M836.5 600v-6M837.5 600v-5M838.5 600v-7M839.5 600v-7M840.5 600v-6M842.5 600v-5M843.5 600v-7M844.5 600v-7M846.5 600v-4M847.5 600v-7M848.5 600v-6M849.5 600v-9M850.5 600v-9M852.5 600v-7M853.5 600v-7M854.5 600v-6M860.5 600v-2M861.5 600v-3M862.5 600v-3M864.5 600v-3M866.5 600v-4M867.5 600v-3M868.5 600v-3M869.5 600v-3M870.5 600v-3M871.5 600v-2M872.5 600v-2M873.5 600v-3M874.5 600v-3M875.5 600v-2M876.5 600v-2M877.5 600v-3M878.5 600v-3M879.5 600v-3M880.5 600v-3M881.5 600v-4M882.5 600v-3M883.5 600v-4M884.5 600v-4M885.5 600v-4M886.5 600v-3M889.5 600v-5M890.5 600v-4M891.5 600v-5M892.5 600v-4M893.5 600v-6M909.5 600v-8M910.5 600v-5M915.5 600v-10M916.5 600v-10M918.5 600v-8M920.5 600v-9M921.5 600v-6M922.5 600v-5M923.5 600v-6M924.5 600v-4M925.5 600v-6M927.5 600v-6M932.5 600v-12M933.5 600v-13M934.5 600v-7" stroke="#f84848" fill="none" shape-rendering="crispEdges"/><path d="M940.500 506v94" stroke="#40f0f0" fill="none" shape-rendering="crispEdges"/><path d="M770.500 507v93" stroke="#ff4040" fill="none" shape-rendering="crispEdges"/><polyline points="769.6,377.4 777.8,385.6 782.6,391.1 790.5,395.9 799.2,400.7 804.0,405.9 809.5,408.1 816.7,411.8 825.4,414.4 834.9,416.0 844.4,417.6 850.7,418.9 853.9,420.5 861.5,420.8 874.2,421.9 883.7,422.7 898.0,424.6 904.3,427.1 912.2,429.3 918.6,433.0 926.5,435.4 932.8,439.8 940.0,443.3" fill="none" stroke="#f0f000" stroke-width="1"/><polyline points="769.6,377.4 773.9,390.4 775.5,388.8 776.3,391.1 779.7,409.1 781.0,407.8 783.4,400.7 785.8,411.0 788.1,412.5 791.3,426.8 792.9,426.0 795.6,416.5 797.7,421.3 800.8,445.0 803.5,435.5 804.5,436.0 805.6,441.1 807.2,438.2 809.5,441.1 812.4,449.8 816.7,443.4 818.7,449.0 821.0,448.2 826.2,437.1 827.8,438.7 832.5,437.1 834.9,441.9 836.5,440.8 839.7,446.6 842.0,448.2 846.8,445.8 848.4,447.4 851.5,456.1 852.0,456.8 860.7,444.1 863.9,443.3 867.8,445.2 871.8,445.7 875.0,447.7 878.1,445.7 881.3,443.3 883.7,447.2 886.9,448.5 890.8,452.8 894.0,454.4 896.1,453.1 898.3,456.0 901.1,469.4 902.7,468.6 906.7,463.9 908.3,464.7 911.4,471.8 914.6,483.7 917.0,490.0 918.6,488.9 924.1,481.3 926.5,486.9 930.4,500.3 932.0,499.5 935.2,497.2 938.8,498.0 940.7,503.5" fill="none" stroke="#40e8f0" stroke-width="1.1"/><path d="M773.9 390.4L775.5 388.8M779.7 409.1L781.0 407.8M791.3 426.8L792.9 426.0M792.9 426.0L795.6 416.5M800.8 445.0L803.5 435.5M818.7 449.0L821.0 448.2M821.0 448.2L826.2 437.1M842.0 448.2L846.8 445.8M851.5 456.1L852.0 456.8M852.0 456.8L860.7 444.1M871.8 445.7L875.0 447.7M875.0 447.7L878.1 445.7M883.7 447.2L886.9 448.5M890.8 452.8L894.0 454.4M901.1 469.4L902.7 468.6M902.7 468.6L906.7 463.9M917.0 490.0L918.6 488.9M918.6 488.9L924.1 481.3M930.4 500.3L932.0 499.5M935.2 497.2L938.8 498.0" fill="none" stroke="#ff5050" stroke-width="1.1"/><path d="M766.0 610L771.5 623.5M793.1 610L798.6 623.5M791.6 623.5L795.0 616M820.2 610L825.8 623.5M818.8 623.5L822.1 616M847.4 610L852.9 623.5M845.9 623.5L849.2 616M874.5 610L880.0 623.5M873.0 623.5L876.3 616M901.5 610L907.0 623.5M900.0 623.5L903.4 616M928.6 610L934.1 623.5M927.1 623.5L930.5 616M955.8 610L961.2 623.5M954.2 623.5L957.6 616M981.4 623.5L986.7 610" fill="none" stroke="#d80000" stroke-width="1.2"/><path d="M821 610.500h28" stroke="#000" stroke-dasharray="3 3" fill="none"/></svg>
<div style="left:767px;top:623px;width:221px;height:1px;background:#d80000"></div>
<svg style="left:769px;top:296px" width="18" height="14" viewBox="0 0 18 14"><path d="M1.500 7.500l4.500 5l10.500-11" fill="none" stroke="#ffff00" stroke-width="2.200"/></svg>
<div class="ax rd" style="left:945px;top:292px;width:40px;height:14px;">7085</div>
<div class="ax rd" style="left:945px;top:313px;width:40px;height:14px;">7039</div>
<div class="ax rd" style="left:945px;top:334px;width:40px;height:14px;">6993</div>
<div class="ax rd" style="left:945px;top:355px;width:40px;height:14px;">6948</div>
<div class="ax rd" style="left:945px;top:376px;width:40px;height:14px;">6902</div>
<div class="ax gy" style="left:945px;top:397px;width:40px;height:14px;">6856</div>
<div class="ax cy" style="left:945px;top:418px;width:40px;height:14px;">6810</div>
<div class="ax cy" style="left:945px;top:439px;width:40px;height:14px;">6765</div>
<div class="ax cy" style="left:945px;top:459px;width:40px;height:14px;">6719</div>
<div class="ax cy" style="left:945px;top:481px;width:40px;height:14px;">6673</div>
<div class="ax cy" style="left:944px;top:506px;width:45px;height:14px;">677018</div>
<div style="left:946px;top:586px;width:30px;height:14px;font-family:'Noto Sans CJK TC',sans-serif;font-weight:500;font-size:12.5px;color:#f0f0f0;line-height:14px">即時</div>
<div class="bt" style="left:769.8px;top:611px;width:24px;height:14px;">細</div>
<div class="bt" style="left:796.86px;top:611px;width:24px;height:14px;">江</div>
<div class="bt" style="left:823.92px;top:611px;width:24px;height:14px;color:#f04040">勢</div>
<div class="bt" style="left:850.98px;top:611px;width:24px;height:14px;">周</div>
<div class="bt" style="left:878.04px;top:611px;width:24px;height:14px;">訊</div>
<div class="bt" style="left:905.1px;top:611px;width:24px;height:14px;">成</div>
<div class="bt" style="left:932.16px;top:611px;width:24px;height:14px;">特</div>
<div class="bt" style="left:959.22px;top:611px;width:24px;height:14px;">解</div>
<div style="left:761px;top:57px;width:6px;height:12px;color:#00a8a8;font-size:11px;line-height:12px;font-weight:bold;overflow:hidden">7</div>
<div style="left:761px;top:118px;width:6px;height:12px;color:#00a8a8;font-size:11px;line-height:12px;font-weight:bold;overflow:hidden">)</div>
<div style="left:761px;top:133px;width:6px;height:12px;color:#00a8a8;font-size:11px;line-height:12px;font-weight:bold;overflow:hidden">)</div>
<div style="left:761px;top:186px;width:6px;height:12px;color:#00a8a8;font-size:11px;line-height:12px;font-weight:bold;overflow:hidden">2</div>
<div style="left:761px;top:201px;width:6px;height:12px;color:#00a8a8;font-size:11px;line-height:12px;font-weight:bold;overflow:hidden">)</div>
<div style="left:761px;top:227px;width:6px;height:12px;color:#00a8a8;font-size:11px;line-height:12px;font-weight:bold;overflow:hidden">5</div>
<div style="left:761px;top:263px;width:6px;height:12px;color:#00a8a8;font-size:11px;line-height:12px;font-weight:bold;overflow:hidden">3</div>
<div style="left:761px;top:278px;width:6px;height:12px;color:#00a8a8;font-size:11px;line-height:12px;font-weight:bold;overflow:hidden">)</div>
<div style="left:761px;top:330px;width:6px;height:12px;color:#00a8a8;font-size:11px;line-height:12px;font-weight:bold;overflow:hidden">l</div>
<div style="left:761px;top:345px;width:6px;height:12px;color:#00a8a8;font-size:11px;line-height:12px;font-weight:bold;overflow:hidden">)</div>
<div style="left:761px;top:395px;width:6px;height:12px;color:#00a8a8;font-size:11px;line-height:12px;font-weight:bold;overflow:hidden">4</div>
<div style="left:761px;top:465px;width:6px;height:12px;color:#00a8a8;font-size:11px;line-height:12px;font-weight:bold;overflow:hidden">)</div>
<div style="left:761px;top:518px;width:6px;height:12px;color:#00a8a8;font-size:11px;line-height:12px;font-weight:bold;overflow:hidden">)</div>
<div style="left:761px;top:573px;width:6px;height:12px;color:#00a8a8;font-size:11px;line-height:12px;font-weight:bold;overflow:hidden">)</div>
<div style="left:761px;top:241px;width:6px;height:12px;background:#dccaca;color:#d80000;font-size:11px;font-weight:bold;line-height:12px;overflow:hidden;text-indent:-1px">0</div>
</body></html>
